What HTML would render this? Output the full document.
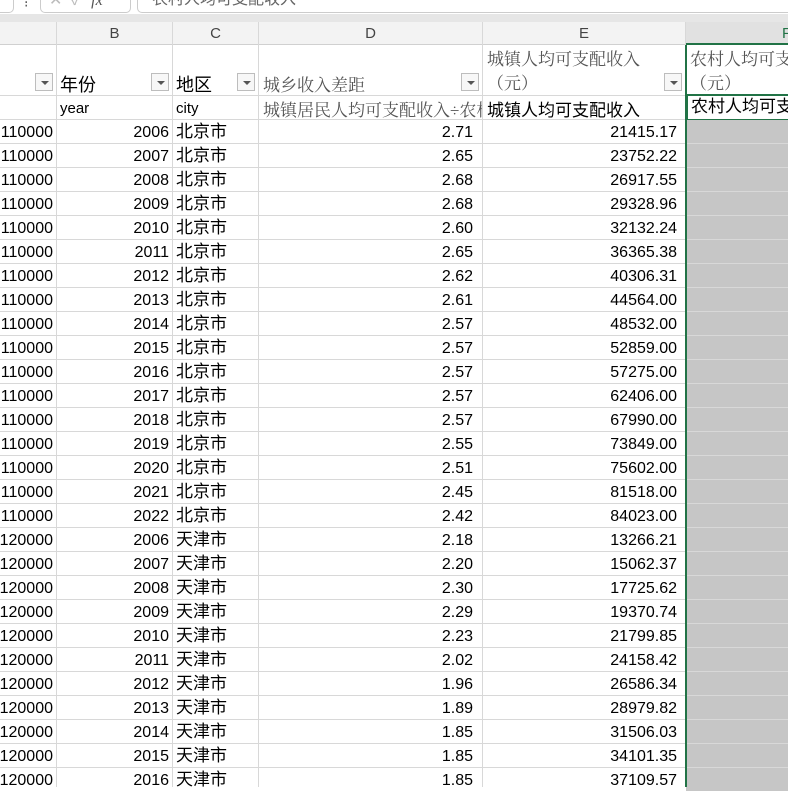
<!DOCTYPE html>
<html><head><meta charset="utf-8"><style>
*{margin:0;padding:0;box-sizing:border-box}
body{width:788px;height:787px;overflow:hidden;background:#fff;position:relative;font-family:"Liberation Sans","Noto Sans CJK SC",sans-serif}
.abs{position:absolute}
.hl{position:absolute;left:0;width:788px;height:1px;background:#d8d8d8}
.vl{position:absolute;top:45px;width:1px;height:742px;background:#d8d8d8}
.row{position:absolute;left:0;width:788px;height:24px;font-size:16px;color:#000}
.row span{position:absolute;top:3px;line-height:20px}
.a{right:735px}
.b{right:619px}
.c{left:176px;font-size:17px;top:2px!important}
.d{right:315px}
.e{right:111px}
.f{left:686px;width:102px;height:23px;top:0!important;background:#c6c6c6}
.flt{position:absolute;top:73px;width:18px;height:18px;border:1px solid #bdbdbd;background:#f7f7f7}
.flt:after{content:"";position:absolute;left:5px;top:7px;border-left:4px solid transparent;border-right:4px solid transparent;border-top:4px solid #555}
.ser{font-family:"Liberation Serif","Noto Serif CJK SC",serif;color:#555;font-size:17px}
.colh{position:absolute;top:22px;height:23px;font-size:15px;color:#444;text-align:center;line-height:23px;border-right:1px solid #d8d8d8}
</style></head><body>
<div class="abs" style="left:0;top:0;width:788px;height:14px;background:#fff"></div>
<div class="abs" style="left:-10px;top:-10px;width:24px;height:23px;border:1px solid #ccc;border-radius:5px"></div>
<div class="abs" style="left:24px;top:-6px;font-size:14px;color:#555">⁝</div>
<div class="abs" style="left:40px;top:-10px;width:91px;height:23px;border:1px solid #ccc;border-radius:5px;color:#bbb;font-size:16px;padding-left:8px;line-height:20px">✕ &nbsp;✓ &nbsp;<i style="color:#555;font-family:'Liberation Serif',serif">fx</i></div>
<div class="abs" style="left:137px;top:-10px;width:660px;height:23px;border:1px solid #ccc;border-radius:5px;font-size:16px;color:#666;padding-left:14px;line-height:18px">农村人均可支配收入</div>
<div class="abs" style="left:0;top:14px;width:788px;height:8px;background:#e6e6e6"></div>
<div class="abs" style="left:0;top:22px;width:788px;height:23px;background:#f3f3f3;border-bottom:1px solid #d0d0d0"></div>
<div class="colh" style="left:0;width:57px"></div>
<div class="colh" style="left:57px;width:116px">B</div>
<div class="colh" style="left:173px;width:86px">C</div>
<div class="colh" style="left:259px;width:224px">D</div>
<div class="colh" style="left:483px;width:203px">E</div>
<div class="colh" style="left:686px;width:110px;background:#e1e1e1;color:#217346;border-bottom:2px solid #217346;text-align:left;padding-left:96px">F</div>
<div class="vl" style="left:56px"></div>
<div class="vl" style="left:172px"></div>
<div class="vl" style="left:258px"></div>
<div class="vl" style="left:482px"></div>
<div class="hl" style="top:95px"></div>
<div class="hl" style="top:119px"></div>
<div class="flt" style="left:35px"></div>
<div class="abs" style="left:60px;top:71px;font-size:18px">年份</div>
<div class="flt" style="left:151px"></div>
<div class="abs" style="left:176px;top:71px;font-size:18px">地区</div>
<div class="flt" style="left:237px"></div>
<div class="abs ser" style="left:263px;top:71px">城乡收入差距</div>
<div class="flt" style="left:461px"></div>
<div class="abs ser" style="left:487px;top:48px;line-height:24px">城镇人均可支配收入<br>（元）</div>
<div class="flt" style="left:664px"></div>
<div class="abs ser" style="left:690px;top:48px;line-height:24px;white-space:nowrap">农村人均可支<br>（元）</div>
<div class="abs" style="left:60px;top:100px;font-size:15px">year</div>
<div class="abs" style="left:176px;top:100px;font-size:15px">city</div>
<div class="abs ser" style="left:263px;top:96px;width:219px;overflow:hidden;white-space:nowrap">城镇居民人均可支配收入÷农村</div>
<div class="abs" style="left:487px;top:96px;font-size:17px">城镇人均可支配收入</div>
<div class="abs" style="left:686px;top:94px;width:110px;height:27px;border:2px solid #217346;font-size:17px;padding-left:3px;line-height:22px;white-space:nowrap">农村人均可支</div>
<div class="row" style="top:120px"><span class="a">110000</span><span class="b">2006</span><span class="c">北京市</span><span class="d">2.71</span><span class="e">21415.17</span><span class="f"></span></div>
<div class="row" style="top:144px"><span class="a">110000</span><span class="b">2007</span><span class="c">北京市</span><span class="d">2.65</span><span class="e">23752.22</span><span class="f"></span></div>
<div class="row" style="top:168px"><span class="a">110000</span><span class="b">2008</span><span class="c">北京市</span><span class="d">2.68</span><span class="e">26917.55</span><span class="f"></span></div>
<div class="row" style="top:192px"><span class="a">110000</span><span class="b">2009</span><span class="c">北京市</span><span class="d">2.68</span><span class="e">29328.96</span><span class="f"></span></div>
<div class="row" style="top:216px"><span class="a">110000</span><span class="b">2010</span><span class="c">北京市</span><span class="d">2.60</span><span class="e">32132.24</span><span class="f"></span></div>
<div class="row" style="top:240px"><span class="a">110000</span><span class="b">2011</span><span class="c">北京市</span><span class="d">2.65</span><span class="e">36365.38</span><span class="f"></span></div>
<div class="row" style="top:264px"><span class="a">110000</span><span class="b">2012</span><span class="c">北京市</span><span class="d">2.62</span><span class="e">40306.31</span><span class="f"></span></div>
<div class="row" style="top:288px"><span class="a">110000</span><span class="b">2013</span><span class="c">北京市</span><span class="d">2.61</span><span class="e">44564.00</span><span class="f"></span></div>
<div class="row" style="top:312px"><span class="a">110000</span><span class="b">2014</span><span class="c">北京市</span><span class="d">2.57</span><span class="e">48532.00</span><span class="f"></span></div>
<div class="row" style="top:336px"><span class="a">110000</span><span class="b">2015</span><span class="c">北京市</span><span class="d">2.57</span><span class="e">52859.00</span><span class="f"></span></div>
<div class="row" style="top:360px"><span class="a">110000</span><span class="b">2016</span><span class="c">北京市</span><span class="d">2.57</span><span class="e">57275.00</span><span class="f"></span></div>
<div class="row" style="top:384px"><span class="a">110000</span><span class="b">2017</span><span class="c">北京市</span><span class="d">2.57</span><span class="e">62406.00</span><span class="f"></span></div>
<div class="row" style="top:408px"><span class="a">110000</span><span class="b">2018</span><span class="c">北京市</span><span class="d">2.57</span><span class="e">67990.00</span><span class="f"></span></div>
<div class="row" style="top:432px"><span class="a">110000</span><span class="b">2019</span><span class="c">北京市</span><span class="d">2.55</span><span class="e">73849.00</span><span class="f"></span></div>
<div class="row" style="top:456px"><span class="a">110000</span><span class="b">2020</span><span class="c">北京市</span><span class="d">2.51</span><span class="e">75602.00</span><span class="f"></span></div>
<div class="row" style="top:480px"><span class="a">110000</span><span class="b">2021</span><span class="c">北京市</span><span class="d">2.45</span><span class="e">81518.00</span><span class="f"></span></div>
<div class="row" style="top:504px"><span class="a">110000</span><span class="b">2022</span><span class="c">北京市</span><span class="d">2.42</span><span class="e">84023.00</span><span class="f"></span></div>
<div class="row" style="top:528px"><span class="a">120000</span><span class="b">2006</span><span class="c">天津市</span><span class="d">2.18</span><span class="e">13266.21</span><span class="f"></span></div>
<div class="row" style="top:552px"><span class="a">120000</span><span class="b">2007</span><span class="c">天津市</span><span class="d">2.20</span><span class="e">15062.37</span><span class="f"></span></div>
<div class="row" style="top:576px"><span class="a">120000</span><span class="b">2008</span><span class="c">天津市</span><span class="d">2.30</span><span class="e">17725.62</span><span class="f"></span></div>
<div class="row" style="top:600px"><span class="a">120000</span><span class="b">2009</span><span class="c">天津市</span><span class="d">2.29</span><span class="e">19370.74</span><span class="f"></span></div>
<div class="row" style="top:624px"><span class="a">120000</span><span class="b">2010</span><span class="c">天津市</span><span class="d">2.23</span><span class="e">21799.85</span><span class="f"></span></div>
<div class="row" style="top:648px"><span class="a">120000</span><span class="b">2011</span><span class="c">天津市</span><span class="d">2.02</span><span class="e">24158.42</span><span class="f"></span></div>
<div class="row" style="top:672px"><span class="a">120000</span><span class="b">2012</span><span class="c">天津市</span><span class="d">1.96</span><span class="e">26586.34</span><span class="f"></span></div>
<div class="row" style="top:696px"><span class="a">120000</span><span class="b">2013</span><span class="c">天津市</span><span class="d">1.89</span><span class="e">28979.82</span><span class="f"></span></div>
<div class="row" style="top:720px"><span class="a">120000</span><span class="b">2014</span><span class="c">天津市</span><span class="d">1.85</span><span class="e">31506.03</span><span class="f"></span></div>
<div class="row" style="top:744px"><span class="a">120000</span><span class="b">2015</span><span class="c">天津市</span><span class="d">1.85</span><span class="e">34101.35</span><span class="f"></span></div>
<div class="row" style="top:768px"><span class="a">120000</span><span class="b">2016</span><span class="c">天津市</span><span class="d">1.85</span><span class="e">37109.57</span><span class="f"></span></div>
<div class="hl" style="top:143px"></div><div class="hl" style="top:167px"></div><div class="hl" style="top:191px"></div><div class="hl" style="top:215px"></div><div class="hl" style="top:239px"></div><div class="hl" style="top:263px"></div><div class="hl" style="top:287px"></div><div class="hl" style="top:311px"></div><div class="hl" style="top:335px"></div><div class="hl" style="top:359px"></div><div class="hl" style="top:383px"></div><div class="hl" style="top:407px"></div><div class="hl" style="top:431px"></div><div class="hl" style="top:455px"></div><div class="hl" style="top:479px"></div><div class="hl" style="top:503px"></div><div class="hl" style="top:527px"></div><div class="hl" style="top:551px"></div><div class="hl" style="top:575px"></div><div class="hl" style="top:599px"></div><div class="hl" style="top:623px"></div><div class="hl" style="top:647px"></div><div class="hl" style="top:671px"></div><div class="hl" style="top:695px"></div><div class="hl" style="top:719px"></div><div class="hl" style="top:743px"></div><div class="hl" style="top:767px"></div>
<div class="abs" style="left:685px;top:45px;width:2px;height:742px;background:#217346"></div>
</body></html>
